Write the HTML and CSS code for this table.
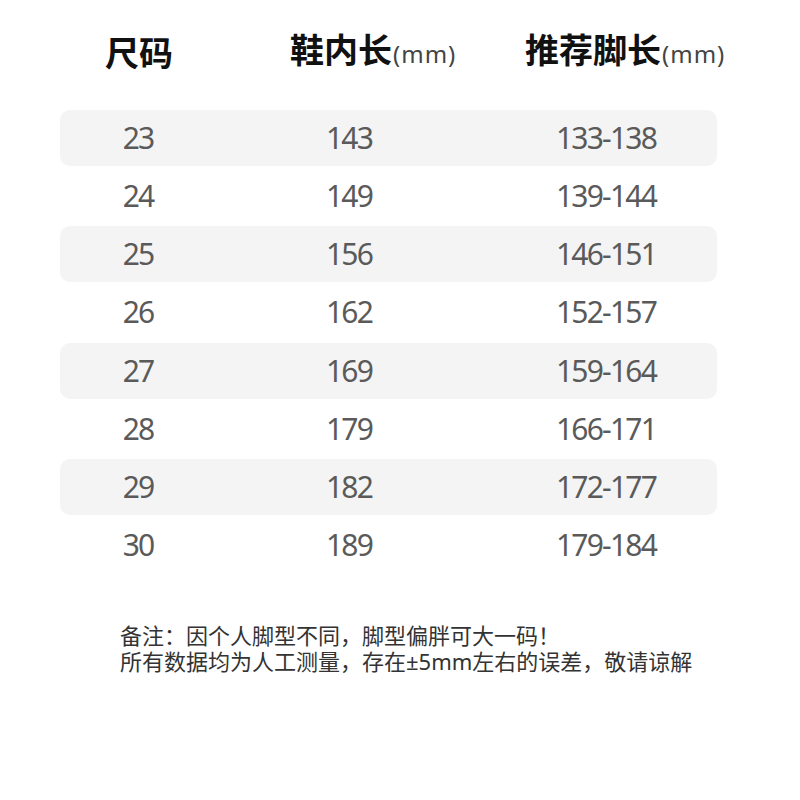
FILE: index.html
```html
<!DOCTYPE html>
<html lang="zh-CN">
<head>
<meta charset="utf-8">
<link rel="stylesheet" href="styles.css">
</head>
<body>
<div class="page">
  <div class="head">
    <div class="h h1">尺码</div>
    <div class="h h2">鞋内长<span class="unit">(mm)</span></div>
    <div class="h h3">推荐脚长<span class="unit">(mm)</span></div>
  </div>
  <div class="table">
    <div class="row alt"><span class="c1">23</span><span class="c2">143</span><span class="c3">133-138</span></div>
    <div class="row"><span class="c1">24</span><span class="c2">149</span><span class="c3">139-144</span></div>
    <div class="row alt"><span class="c1">25</span><span class="c2">156</span><span class="c3">146-151</span></div>
    <div class="row"><span class="c1">26</span><span class="c2">162</span><span class="c3">152-157</span></div>
    <div class="row alt"><span class="c1">27</span><span class="c2">169</span><span class="c3">159-164</span></div>
    <div class="row"><span class="c1">28</span><span class="c2">179</span><span class="c3">166-171</span></div>
    <div class="row alt"><span class="c1">29</span><span class="c2">182</span><span class="c3">172-177</span></div>
    <div class="row"><span class="c1">30</span><span class="c2">189</span><span class="c3">179-184</span></div>
  </div>
  <div class="notes">
    <p>备注：因个人脚型不同，脚型偏胖可大一码！</p>
    <p>所有数据均为人工测量，存在±5mm左右的误差，敬请谅解</p>
  </div>
</div>
</body>
</html>
```
FILE: styles.css
```css
html, body {
  margin: 0;
  padding: 0;
  background: #ffffff;
}
body {
  font-family: "Noto Sans", "Noto Sans CJK SC", sans-serif;
  width: 800px;
  height: 800px;
  overflow: hidden;
}
.page {
  padding-top: 29px;
}
.head {
  display: grid;
  grid-template-columns: 185px 235px 1fr;
  padding-left: 105px;
  height: 40px;
  align-items: center;
}
.h {
  font-family: "Noto Sans CJK SC", sans-serif;
  font-weight: 700;
  font-size: 34px;
  line-height: 40px;
  color: #111111;
  white-space: nowrap;
}
.unit {
  font-family: "Noto Sans", "Noto Sans CJK SC", sans-serif;
  font-weight: 400;
  font-size: 24px;
  color: #444444;
  letter-spacing: 1px;
  margin-left: 1px;
}
.table {
  margin: 41px 83px 0 60px;
  display: flex;
  flex-direction: column;
  gap: 2.15px;
}
.row {
  display: grid;
  grid-template-columns: 156px 266px 1fr;
  height: 56px;
  align-items: center;
  border-radius: 10px;
  font-size: 30px;
  line-height: 56px;
  color: #5a5a5a;
  letter-spacing: -1.8px;
  text-align: center;
}
.row.alt {
  background: #f4f4f4;
}
.c3 {
  padding-left: 13px;
}
.notes {
  margin: 49px 0 0 120px;
  font-family: "Noto Sans", "Noto Sans CJK SC", sans-serif;
  font-size: 22px;
  line-height: 26px;
  color: #333333;
}
.notes p {
  margin: 0;
  height: 26px;
  white-space: nowrap;
}
```
